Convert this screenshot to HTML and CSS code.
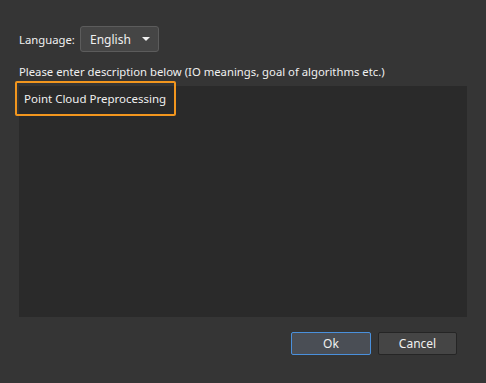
FILE: index.html
```html
<!DOCTYPE html>
<html lang="en">

<head>
    <meta charset="UTF-8">
    <meta name="viewport" content="width=device-width, initial-scale=1.0">
    <title>Description</title>
    <link rel="stylesheet" href="styles.css">
</head>

<body>
    <div class="dialog">
        <div class="lang-row">
            <span class="lang-label">Language:</span>
            <div class="combo">
                <span>English</span>
                <span class="arrow"></span>
            </div>
        </div>

        <div class="prompt">Please enter description below (IO meanings, goal of algorithms etc.)</div>

        <div class="editor">
            <div class="editor-text">Point Cloud Preprocessing</div>
            <!-- highlight around the first line -->
            <div class="highlight"></div>
        </div>

        <div class="buttons">
            <button class="btn btn-default">Ok</button>
            <button class="btn">Cancel</button>
        </div>
    </div>
</body>

</html>
```

FILE: styles.css
```css
html,
body {
    margin: 0;
    height: 100%;
}

body {
    background-color: #353535;
    color: #f0f0f0;
    font-family: "Noto Sans", "Open Sans", sans-serif;
    font-size: 11.3px;
}

.dialog {
    padding: 26px 19px 0 19px;
}

.lang-row {
    display: flex;
    align-items: center;
    height: 26px;
}

.lang-label {
    width: 61px;
    padding-top: 1px;
}

.combo {
    box-sizing: border-box;
    display: flex;
    align-items: center;
    justify-content: space-between;
    width: 79px;
    height: 26px;
    padding: 0 8px 0 9px;
    border: 1px solid #5c5c5c;
    border-radius: 3px;
    background-color: #454545;
    font-size: 12px;
}

.arrow {
    width: 0;
    height: 0;
    border-left: 4px solid transparent;
    border-right: 4px solid transparent;
    border-top: 4px solid #f0f0f0;
}

.prompt {
    margin-top: 12px;
    line-height: 16px;
}

.editor {
    position: relative;
    box-sizing: border-box;
    width: 448px;
    height: 231px;
    margin-top: 6px;
    padding: 5px 5px;
    background-color: #2a2a2a;
}

.editor-text {
    line-height: 16px;
    font-size: 11.5px;
}

.highlight {
    position: absolute;
    left: -4px;
    top: -5px;
    width: 157px;
    height: 31px;
    border: 2px solid #f2961e;
    border-radius: 2px;
}

.buttons {
    display: flex;
    justify-content: flex-end;
    gap: 7px;
    margin-top: 15px;
    margin-right: 10px;
}

.btn {
    box-sizing: border-box;
    width: 79px;
    height: 23px;
    padding: 0;
    border: 1px solid #252525;
    border-radius: 2px;
    background-color: #454545;
    color: #f0f0f0;
    font-family: inherit;
    font-size: 12px;
}

.btn-default {
    width: 80px;
    border-color: #4a90dc;
    background-color: #4a4e55;
}
```
